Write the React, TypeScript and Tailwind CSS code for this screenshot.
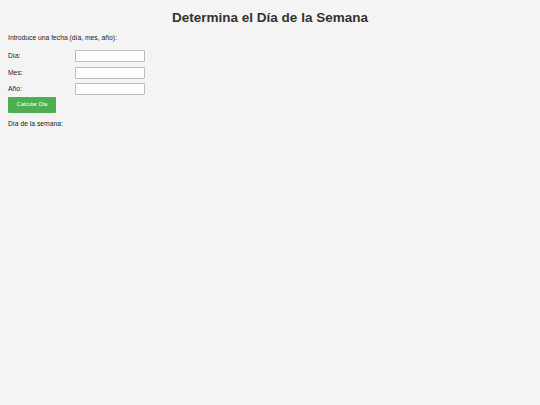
import React from 'react';

const fields = ['Día', 'Mes', 'Año'];

export default function App() {
  return (
    <div className="min-h-screen bg-[#f4f4f4] px-[8px] pt-[9.7px] text-[#222] font-['Liberation_Sans',Arial,sans-serif]">
      <h1 className="text-center text-[13.5px] leading-[15.5px] font-bold text-[#333]">
        Determina el Día de la Semana
      </h1>

      <p className="mt-[9.2px] text-[6.75px] leading-[7.8px]">
        Introduce una fecha (día, mes, año):
      </p>

      <div className="mt-[8.1px] flex flex-col gap-[4.35px]">
        {fields.map((f) => (
          <div key={f} className="flex items-center">
            <label className="w-[67.3px] text-[6.75px] leading-[7.8px]">{f}:</label>
            <input
              type="text"
              className="h-[12px] w-[69.5px] rounded-[1px] border border-[#bdbdbd] bg-white"
            />
          </div>
        ))}
      </div>

      <button className="mt-[2.3px] block h-[15.4px] w-[48px] rounded-[1px] bg-[#4caf50] text-[5.6px] leading-none text-white">
        Calcular Día
      </button>

      <p className="mt-[7.7px] text-[6.75px] leading-[7.8px]">Día de la semana:</p>
    </div>
  );
}
